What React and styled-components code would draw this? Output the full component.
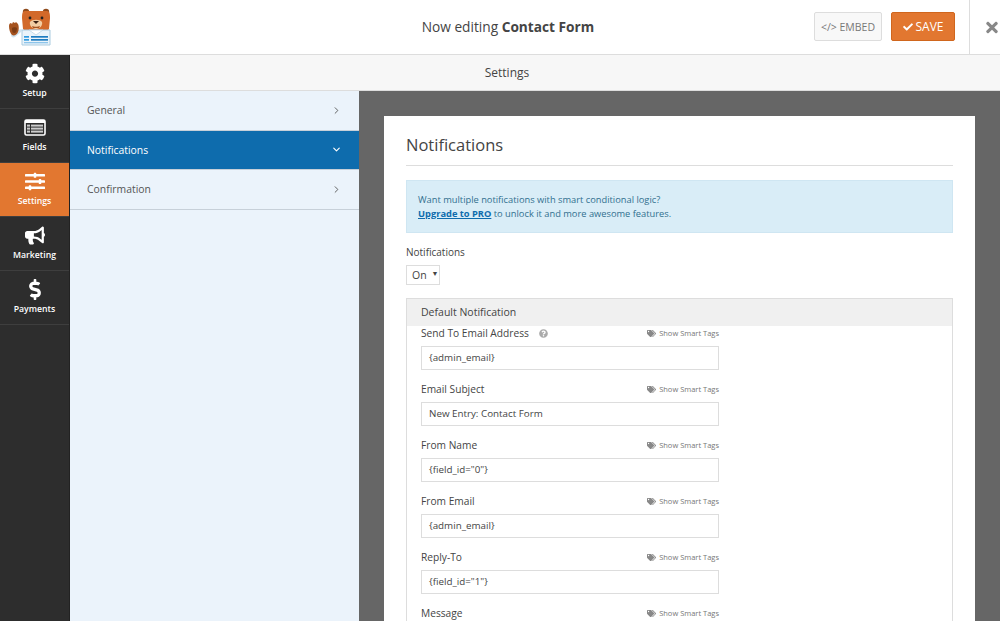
import React from 'react'
import styled, { createGlobalStyle } from 'styled-components'
import {
  FaCog, FaSlidersH, FaBullhorn, FaDollarSign, FaCheck, FaTimes,
  FaTags, FaQuestionCircle,
} from 'react-icons/fa'
import { ChevronRight, ChevronDown } from 'lucide-react'

const Global = createGlobalStyle`
  html, body { margin: 0; padding: 0; height: 100%; overflow: hidden; }
  body { font-family: "Open Sans", "Liberation Sans", sans-serif; color: #444; }
  * { box-sizing: border-box; }
`
const Page = styled.div`
  width: 1000px;
  height: 621px;
  display: flex;
  flex-direction: column;
  overflow: hidden;
  background: #fff;
`
const Header = styled.header`
  height: 55px;
  flex: none;
  display: flex;
  align-items: center;
  border-bottom: 1px solid #ddd;
  background: #fff;
`
const LogoBox = styled.div`
  width: 70px;
  padding: 8px 0 0 8px;
  height: 54px;
`
const Title = styled.div`
  flex: 1;
  text-align: center;
  font-size: 13.7px;
  color: #444;
  padding-left: 132px;
  margin-top: -1px;
  strong { font-weight: 700; }
`
const Embed = styled.button`
  width: 68px;
  height: 29px;
  margin: -1px 9px 0 0;
  border: 1px solid #ddd;
  border-radius: 2px;
  background: #f8f8f8;
  color: #777;
  font: 400 10.5px "Open Sans", sans-serif;
  padding: 0;
  white-space: nowrap;
`
const Save = styled.button`
  width: 64px;
  height: 29px;
  margin: -1px 14px 0 0;
  border: 1px solid #d0661d;
  border-radius: 2px;
  background: #e27730;
  color: #fff;
  font: 400 12px "Open Sans", sans-serif;
  padding: 0;
  display: flex;
  align-items: center;
  justify-content: center;
  gap: 3px;
`
const CloseBox = styled.div`
  width: 31px;
  height: 54px;
  border-left: 1px solid #ddd;
  display: flex;
  align-items: center;
  justify-content: center;
  color: #888;
  font-size: 17px;
  padding-left: 14px;
`
const Body = styled.div`
  flex: 1;
  display: flex;
  min-height: 0;
`
const Rail = styled.nav`
  width: 70px;
  flex: none;
  background: #2d2d2d;
  border-right: 1px solid #222;
`
const RailItem = styled.div`
  height: 54px;
  display: flex;
  flex-direction: column;
  align-items: center;
  color: #fff;
  font-size: 8.7px;
  line-height: 12px;
  font-weight: 600;
  border-bottom: 1px solid #3e3e3e;
  padding-top: 8px;
  background: ${(props) => (props.$active ? '#e27730' : 'transparent')};
  svg { font-size: 20px; height: 21px; margin-bottom: 3px; }
`
const Content = styled.div`
  flex: 1;
  display: flex;
  flex-direction: column;
  min-width: 0;
`
const SubHeader = styled.div`
  height: 36px;
  flex: none;
  background: #f7f7f7;
  border-bottom: 1px solid #ddd;
  text-align: center;
  font-size: 12px;
  line-height: 35px;
  color: #444;
  padding-right: 56px;
`
const Split = styled.div`
  flex: 1;
  display: flex;
  min-height: 0;
`
const SidePanel = styled.aside`
  width: 289px;
  flex: none;
  background: #ebf3fb;
`
const SideRow = styled.div`
  height: ${(props) => props.$height}px;
  display: flex;
  align-items: center;
  justify-content: space-between;
  padding: 0 17px 1px 17px;
  font-size: 10.4px;
  color: ${(props) => (props.$active ? '#fff' : '#555')};
  background: ${(props) => (props.$active ? '#0e6cad' : 'transparent')};
  border-bottom: 1px solid #c7d0d9;
`
const Main = styled.main`
  flex: 1;
  background: #666;
  padding: 25px 25px 0 25px;
  overflow: hidden;
`
const Card = styled.section`
  background: #fff;
  padding: 0 22px;
  height: 100%;
`
const CardTitle = styled.h2`
  margin: 0;
  height: 50px;
  font-size: 16.5px;
  font-weight: 400;
  line-height: 58px;
  color: #444;
  border-bottom: 1px solid #ddd;
`
const Notice = styled.div`
  margin-top: 14px;
  height: 53px;
  background: #d9edf7;
  border: 1px solid #cfe6f2;
  padding: 12px 11px 0;
  font-size: 9.3px;
  line-height: 14px;
  color: #31708f;
  a { color: #0e6cad; font-weight: 700; text-decoration: underline; }
`
const Label = styled.div`
  margin-top: 12px;
  font-size: 10px;
  line-height: 15px;
  color: #444;
`
const Select = styled.div`
  margin-top: 5px;
  width: 34px;
  height: 20px;
  border: 1px solid #ddd;
  font-size: 10.5px;
  line-height: 18px;
  padding-left: 5px;
  color: #444;
  display: flex;
  span { font-size: 7px; margin-left: 5px; line-height: 15px; }
`
const Box = styled.div`
  margin-top: 13px;
  border: 1px solid #ddd;
  border-bottom: none;
  height: 340px;
`
const BoxHead = styled.div`
  height: 27px;
  background: #f0f0f0;
  padding-left: 14px;
  font-size: 10.5px;
  line-height: 27px;
  color: #444;
`
const Fields = styled.div`
  padding-left: 14px;
`
const Field = styled.div`
  width: 298px;
  height: 56px;
`
const FieldTop = styled.div`
  display: flex;
  justify-content: space-between;
  align-items: center;
  height: 14px;
`
const FieldLabel = styled.span`
  font-size: 10.2px;
  line-height: 14px;
  color: #444;
  display: flex;
  align-items: center;
  gap: 10px;
  svg { color: #aaa; font-size: 9px; }
`
const Tags = styled.span`
  font-size: 7.5px;
  color: #777;
  display: flex;
  align-items: center;
  gap: 3px;
  svg { color: #888; font-size: 9px; }
`
const Input = styled.div`
  margin-top: 6px;
  height: 24px;
  border: 1px solid #ddd;
  padding-left: 7px;
  font-size: 9.8px;
  line-height: 21px;
  color: #444;
`

const Logo = () => (
  <svg width="44" height="38" viewBox="0 0 44 38">
    <path d="M13 24l-6 5c-2 1-4 0-4-2l1-2 6-3 4-1z" fill="#cfe3f0" />
    <path d="M1 18c0-2 1-3 2-3l1 1 1-2 2 1 1-1 2 2c1 2 1 6 0 8-1 3-4 4-6 3-2-2-3-6-3-9z" fill="#a5531f" />
    <path d="M4 20c1-1 4-1 5 0 0 3-1 5-3 5s-2-3-2-5z" fill="#7d3d15" />
    <circle cx="18" cy="4" r="3.2" fill="#8f4a1c" />
    <circle cx="38" cy="4" r="3.2" fill="#8f4a1c" />
    <path d="M17 3h22c3 0 3 4 3 7l-1 11-3 3H18l-3-3-1-11c0-3 0-7 3-7z" fill="#d2692a" />
    <path d="M22 14c2-3 10-3 12 0 1 3-2 7-6 7s-7-4-6-7z" fill="#f2cda3" />
    <circle cx="22" cy="10" r="1.4" fill="#222" />
    <circle cx="34" cy="10" r="1.4" fill="#222" />
    <path d="M25 13h6l-3 3z" fill="#3a2113" />
    <path d="M24 18c2 1 6 1 8 0l-1 2h-6z" fill="#a5531f" />
    <path d="M14 22h28v15H14z" fill="#e9f3fa" stroke="#a9cbe0" strokeWidth="1" />
    <path d="M21 22h14l-7 5z" fill="#fff" stroke="#bcd5e6" strokeWidth=".8" />
    <rect x="16" y="28" width="5" height="1.7" fill="#2f9be0" />
    <rect x="23" y="28" width="17" height="1.7" fill="#1f7cc0" />
    <rect x="16" y="31" width="5" height="1.7" fill="#2f9be0" />
    <rect x="23" y="31" width="17" height="1.7" fill="#1f7cc0" />
    <rect x="16" y="34" width="24" height="1.3" fill="#8cc4ea" />
  </svg>
)

const FieldsIcon = () => (
  <svg width="22" height="21" viewBox="0 0 22 21">
    <rect x="1" y="3" width="20" height="15" rx="1.5" fill="none" stroke="#fff" strokeWidth="1.6" />
    <rect x="1" y="3" width="20" height="3" fill="#fff" />
    <rect x="3" y="7.6" width="3" height="2" fill="#ccc" />
    <rect x="7" y="7.6" width="12" height="2" fill="#ccc" />
    <rect x="3" y="10.6" width="3" height="2" fill="#ccc" />
    <rect x="7" y="10.6" width="12" height="2" fill="#ccc" />
    <rect x="3" y="13.6" width="3" height="2" fill="#ccc" />
    <rect x="7" y="13.6" width="12" height="2" fill="#ccc" />
  </svg>
)

const rail = [
  ['Setup', <FaCog key="i" />],
  ['Fields', <FieldsIcon key="i" />],
  ['Settings', <FaSlidersH key="i" />],
  ['Marketing', <FaBullhorn key="i" />],
  ['Payments', <FaDollarSign key="i" />],
]

const fields = [
  ['Send To Email Address', '{admin_email}', true],
  ['Email Subject', 'New Entry: Contact Form'],
  ['From Name', '{field_id="0"}'],
  ['From Email', '{admin_email}'],
  ['Reply-To', '{field_id="1"}'],
  ['Message', ''],
]

const App = () => (
  <Page>
    <Global />
    <Header>
      <LogoBox><Logo /></LogoBox>
      <Title>Now editing <strong>Contact Form</strong></Title>
      <Embed>&lt;/&gt; EMBED</Embed>
      <Save><FaCheck size={10} /> SAVE</Save>
      <CloseBox><FaTimes /></CloseBox>
    </Header>
    <Body>
      <Rail>
        {rail.map(([name, icon]) => (
          <RailItem key={name} $active={name === 'Settings'}>{icon}{name}</RailItem>
        ))}
      </Rail>
      <Content>
        <SubHeader>Settings</SubHeader>
        <Split>
          <SidePanel>
            <SideRow $height={40}>General <ChevronRight size={11} strokeWidth={2} /></SideRow>
            <SideRow $height={39} $active>Notifications <ChevronDown size={11} strokeWidth={2.5} /></SideRow>
            <SideRow $height={40}>Confirmation <ChevronRight size={11} strokeWidth={2} /></SideRow>
          </SidePanel>
          <Main>
            <Card>
              <CardTitle>Notifications</CardTitle>
              <Notice>
                Want multiple notifications with smart conditional logic?<br />
                <a>Upgrade to PRO</a> to unlock it and more awesome features.
              </Notice>
              <Label>Notifications</Label>
              <Select>On <span>▼</span></Select>
              <Box>
                <BoxHead>Default Notification</BoxHead>
                <Fields>
                  {fields.map(([label, value, help]) => (
                    <Field key={label}>
                      <FieldTop>
                        <FieldLabel>{label}{help && <FaQuestionCircle />}</FieldLabel>
                        <Tags><FaTags /> Show Smart Tags</Tags>
                      </FieldTop>
                      {value && <Input>{value}</Input>}
                    </Field>
                  ))}
                </Fields>
              </Box>
            </Card>
          </Main>
        </Split>
      </Content>
    </Body>
  </Page>
)

export default App
